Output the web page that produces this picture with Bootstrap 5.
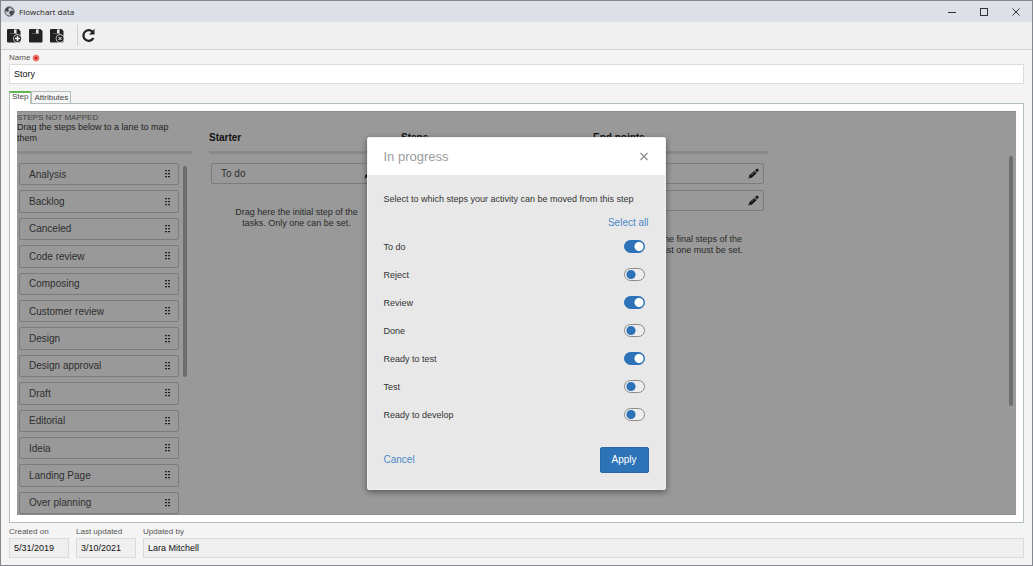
<!DOCTYPE html>
<html lang="en">
<head>
<meta charset="utf-8">
<meta name="viewport" content="width=device-width, initial-scale=1">
<title>Flowchart data</title>
<link href="https://cdn.jsdelivr.net/npm/bootstrap@5.3.0/dist/css/bootstrap.min.css" rel="stylesheet">
<style>
body{font-family:"Liberation Sans",Arial,sans-serif;font-size:9px;line-height:11px;color:#222;background:#f4f4f4}
button{line-height:inherit}
.win{height:100vh;min-height:480px;border:1px solid #85878c}
.titlebar{height:21px;background:#dde0e6;font-family:"Open Sans",sans-serif;font-size:8px;color:#1c1c1c;padding-left:3px;padding-right:10px}
.plain{border:0;background:none;padding:0;display:flex;align-items:center;justify-content:center}
.win-controls{gap:20px}
.toolbar{height:28px;background:#f0f0f0;border-bottom:1px solid #d2d3d5;padding:0 6px;gap:7px}
.toolbar .divider{width:1px;height:21px;background:#cfcfcf;margin-left:6px;margin-right:-4px}
.content-area{padding:2px 8px 7px}
.field-label{font-size:8px;line-height:12px;color:#555;margin:0}
.field-label svg{margin-left:2px}
.field{height:20px;border:1px solid #dcdcdc;border-radius:0;padding:0 4px;font-size:9px;line-height:18px;color:#111;background:#fff}
.field[readonly]{background:#efefef;border-color:#d9dad9}
.date-col{width:60px}
.tabs{margin-top:7px;gap:0}
.tab-btn{height:12px;border:1px solid #b3bfbd;border-bottom:0;font-size:8px;line-height:10px;color:#444;background:#f4f4f4;padding:0 2px;border-radius:0}
.tab-btn.active{height:13px;border-top:2px solid #63b64f;background:#fff;margin-bottom:-1px;padding:0 2px 3px;line-height:8px;z-index:1;position:relative}
.panel{border:1px solid #b3bfbd;background:#fff;padding:7px}
.board{background:#999;overflow:hidden;gap:17px;border-top:1px solid #8c8c8c;border-bottom:1px solid #8c8c8c}
.lane{width:175px;flex:none}
.lane-head{height:42px;border-bottom:3px solid #898989;margin-bottom:9px;padding:1px 15px 0 0}
.lane-head h2{font-size:10px;line-height:12px;font-weight:700;color:#111;margin:19px 0 0}
.caps{font-size:8px;line-height:9px;color:#444}
.step-list{gap:5px;width:160px;margin-left:2px}
.step{border:1px solid #7c7c7c;border-radius:2px;min-height:21px;font-size:10px;color:#2e2e2e;padding:0 8px 0 9px}
.lane-cards{gap:6px;margin:1px 4px 0 2px}
.lane-cards .step{padding-right:4px}
.hint{margin:23px 0 0;color:#2a2a2a}
.thumb{width:4px;border-radius:2px;background:#6d6d6d}
.thumb-list{height:211px;margin:3px 0 0 4px}
.thumb-board{height:250px;margin:44px 3px 0 0}
.dialog{width:299px;top:25px;left:50%;margin-left:-150px;border:1px solid #f2f2f2;border-radius:2px;background:#e8e8e8;box-shadow:0 2px 6px rgba(0,0,0,.45);overflow:hidden;z-index:5}
.dialog-head{height:37px;background:#fff;padding:0 16px}
.dialog-head h1{font-size:13px;line-height:16px;font-weight:400;color:#9b9b9b;margin:0}
.dialog-body{padding:19px 16px 16px;color:#333}
.link-blue{font-size:10px;line-height:12px;color:#4a89c8;text-decoration:none}
.switches{margin-top:4px;margin-bottom:18px}
.switch-row{height:28px}
.switch-row input{appearance:none;width:21px;height:13px;border:1px solid #8b8b8b;border-radius:7px;margin:0 4px 2px 0;background:radial-gradient(circle at 7px 50%,#2d73b8 4px,transparent 5px) #ededed;background-origin:border-box}
.switch-row input:checked{border-color:#2d73b8;background:radial-gradient(circle at 15px 50%,#fff 4px,transparent 5px) #2d73b8;background-origin:border-box}
.apply{width:49px;height:26px;border-radius:2px;background:#2d73b8;border:1px solid #2868a8;color:#fff;font-size:10px;line-height:12px;padding:0}
.footer-fields{gap:7px;padding-top:3px}
</style>
</head>
<body>
<svg width="0" height="0" class="d-none" aria-hidden="true">
<symbol id="disk" viewBox="0 0 14 14"><path fill="#222" fill-rule="evenodd" d="M1 0h2v5h7V0h1.500l2 2v10.500a1 1 0 0 1-1 1H1a1 1 0 0 1-1-1V1a1 1 0 0 1 1-1zM7 .8v3h2v-3z"/><path fill="#8a8a8a" d="M3 0h7v5H3z"/><path fill="#222" d="M3 0h4v4.500H3z"/><path fill="#e8e8e8" d="M7 1h2v3H7z"/></symbol>
<symbol id="grip" viewBox="0 0 5 8"><path fill="#222" d="M0 0h2v1.300H0zM3 0h2v1.300H3zM0 3h2v1.300H0zM3 3h2v1.300H3zM0 6h2v1.300H0zM3 6h2v1.300H3z"/></symbol>
<symbol id="pen" viewBox="0 0 12 12"><path fill="#111" d="M.5 11.500l1-3.500 5.500-5 2.500 2.500-5.500 5zM7.800 2.300L9.500.8q.4-.3.800 0l1.200 1.200q.3.400 0 .8L10 4.500z"/><path stroke="#999" stroke-width=".7" d="M3.500 7.800l4-3.800M1.300 9.300l1.400 1.400"/></symbol>
</svg>
<div class="win d-flex flex-column">
  <header class="titlebar d-flex align-items-center flex-shrink-0">
    <svg width="11" height="11" viewBox="0 0 11 11" class="me-1"><circle cx="5.500" cy="5.500" r="4.600" fill="#c9ccd0" stroke="#4a4d50" stroke-width="1"/><path fill="#45484b" d="M1 4q1-3 4-3l1 1-2 1 1 2-2 1-1-1zM6 5l3-.5 1 1.500q-.5 3-3 3.800L6 8 5 7zM7 1.500l2 1.500-1.500.5z"/></svg>
    <span>Flowchart data</span>
    <div class="win-controls d-flex ms-auto">
      <button class="plain" aria-label="Minimize"><svg width="12" height="12"><path stroke="#333" d="M2 6.500h8"/></svg></button>
      <button class="plain" aria-label="Maximize"><svg width="12" height="12"><rect x="2.500" y="2.500" width="7" height="7" fill="none" stroke="#333"/></svg></button>
      <button class="plain" aria-label="Close"><svg width="12" height="12"><path stroke="#333" d="M2.500 2.500l7 7m0-7l-7 7"/></svg></button>
    </div>
  </header>
  <nav class="toolbar d-flex align-items-center flex-shrink-0">
    <button class="plain" aria-label="Save and new"><svg width="15" height="14"><use href="#disk" width="14" height="14"/><circle cx="10.500" cy="9.500" r="4.300" fill="#f0f0f0"/><circle cx="10.500" cy="9.500" r="3.600" fill="#222"/><path stroke="#fff" stroke-width="1.400" d="M8 9.500h5m-2.500-2.500v5"/></svg></button>
    <button class="plain" aria-label="Save"><svg width="14" height="14"><use href="#disk"/></svg></button>
    <button class="plain" aria-label="Save and close"><svg width="14" height="14"><use href="#disk"/><circle cx="10" cy="9.500" r="4.300" fill="#f0f0f0"/><circle cx="10" cy="9.500" r="3.600" fill="#222"/><path stroke="#fff" d="M8.500 8l3 3m0-3l-3 3"/></svg></button>
    <span class="divider"></span>
    <button class="plain" aria-label="Refresh"><svg width="15" height="15" viewBox="0 0 15 15"><path fill="none" stroke="#222" stroke-width="2.200" d="M11.500 3.800A5.300 5.300 0 1 0 12.400 10"/><path fill="#222" d="M13.500.8v5.700H8z"/></svg></button>
  </nav>
  <main class="content-area d-flex flex-column flex-fill">
    <label class="field-label d-flex align-items-center" for="name">Name<svg width="8" height="8"><circle cx="4" cy="4" r="3" fill="#fbd0cc" stroke="#ee7a72"/><path stroke="#d9251b" stroke-width="1.200" d="M4 1.500v5M1.800 2.800l4.400 2.400m0-2.400L1.800 5.200"/></svg></label>
    <input id="name" class="field w-100" value="Story">
    <div class="tabs d-flex align-items-end" role="tablist">
      <button class="tab-btn active" role="tab">Step</button>
      <button class="tab-btn" role="tab">Attributes</button>
    </div>
    <section class="panel d-flex flex-fill">
      <div class="board d-flex flex-fill position-relative">
        <section class="lane d-flex flex-column">
          <div class="lane-head"><div class="caps">STEPS NOT MAPPED</div>Drag the steps below to a lane to map them</div>
          <div class="d-flex flex-fill">
            <div class="step-list d-flex flex-column" id="steps"></div>
            <div class="thumb thumb-list"></div>
          </div>
        </section>
        <section class="lane">
          <div class="lane-head"><h2>Starter</h2></div>
          <div class="lane-cards d-flex flex-column">
            <div class="step d-flex align-items-center justify-content-between">To do<button class="plain" aria-label="Edit To do"><svg width="11" height="11"><use href="#pen"/></svg></button></div>
          </div>
          <p class="hint text-center">Drag here the initial step of the<br>tasks. Only one can be set.</p>
        </section>
        <section class="lane">
          <div class="lane-head"><h2>Steps</h2></div>
        </section>
        <section class="lane">
          <div class="lane-head"><h2>End points</h2></div>
          <div class="lane-cards d-flex flex-column">
            <div class="step d-flex align-items-center justify-content-end"><button class="plain" aria-label="Edit first end point"><svg width="11" height="11"><use href="#pen"/></svg></button></div>
            <div class="step d-flex align-items-center justify-content-end"><button class="plain" aria-label="Edit second end point"><svg width="11" height="11"><use href="#pen"/></svg></button></div>
          </div>
          <p class="hint text-center">Drag here the final steps of the<br>tasks. At least one must be set.</p>
        </section>
        <div class="thumb thumb-board ms-auto"></div>
        <div class="dialog position-absolute" role="dialog" aria-labelledby="dlg">
          <div class="dialog-head d-flex align-items-center justify-content-between">
            <h1 id="dlg">In progress</h1>
            <button class="plain" aria-label="Close dialog"><svg width="10" height="10"><path stroke="#8c8c8c" stroke-width="1.300" d="M1.500 1l7 7m0-7l-7 7"/></svg></button>
          </div>
          <form class="dialog-body">
            <div>Select to which steps your activity can be moved from this step</div>
            <div class="text-end mt-2 pt-1"><a href="#" class="link-blue">Select all</a></div>
            <div class="switches" id="switches"></div>
            <div class="d-flex align-items-center justify-content-between">
              <a href="#" class="link-blue">Cancel</a>
              <button type="button" class="apply">Apply</button>
            </div>
          </form>
        </div>
      </div>
    </section>
    <footer class="footer-fields d-flex">
      <div class="date-col"><label class="field-label d-block" for="created">Created on</label><input id="created" class="field w-100" value="5/31/2019" readonly></div>
      <div class="date-col"><label class="field-label d-block" for="updated">Last updated</label><input id="updated" class="field w-100" value="3/10/2021" readonly></div>
      <div class="flex-fill"><label class="field-label d-block" for="by">Updated by</label><input id="by" class="field w-100" value="Lara Mitchell" readonly></div>
    </footer>
  </main>
</div>
<script src="https://cdn.jsdelivr.net/npm/bootstrap@5.3.0/dist/js/bootstrap.bundle.min.js"></script>
<script>
const steps=["Analysis","Backlog","Canceled","Code review","Composing","Customer review","Design","Design approval","Draft","Editorial","Ideia","Landing Page","Over planning"];
document.getElementById("steps").innerHTML=steps.map(s=>`<div class="step d-flex flex-fill align-items-center justify-content-between">${s}<svg width="5" height="8"><use href="#grip"/></svg></div>`).join("");
const targets=[["To do",1],["Reject",0],["Review",1],["Done",0],["Ready to test",1],["Test",0],["Ready to develop",0]];
document.getElementById("switches").innerHTML=targets.map(([t,on],i)=>`<div class="switch-row d-flex align-items-center justify-content-between"><label for="sw${i}">${t}</label><input type="checkbox" role="switch" id="sw${i}"${on?" checked":""}></div>`).join("");
</script>
</body>
</html>
